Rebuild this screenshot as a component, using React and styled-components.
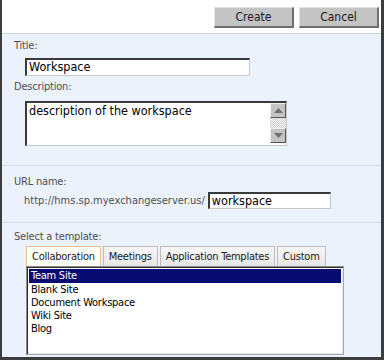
import React from 'react';
import styled, { createGlobalStyle } from 'styled-components';

const GlobalStyle = createGlobalStyle`
  body {
    margin: 0;
    font-family: "DejaVu Sans", sans-serif;
    font-stretch: condensed;
  }
`;

const templates = {
  Collaboration: ['Team Site', 'Blank Site', 'Document Workspace', 'Wiki Site', 'Blog'],
};

export default function App() {
  const tabs = ['Collaboration', 'Meetings', 'Application Templates', 'Custom'];
  const active = 'Collaboration';
  return (
    <Frame>
      <GlobalStyle />
      <Toolbar>
        <Button>Create</Button>
        <Button>Cancel</Button>
      </Toolbar>
      <Body>
        <Section $pt={5} $pb={19}>
          <Label>Title:</Label>
          <Input $width={225} $mt={5} $ml={11}>Workspace</Input>
          <Label $mt={4}>Description:</Label>
          <TextArea>
            <TextAreaText>description of the workspace</TextAreaText>
            <ScrollBar>
              <ScrollButton>
                <svg width="9" height="5" viewBox="0 0 9 5">
                  <path d="M0 5 L4.5 0 L9 5 Z" fill="#6f6f6f" />
                </svg>
              </ScrollButton>
              <ScrollTrack />
              <ScrollButton>
                <svg width="9" height="5" viewBox="0 0 9 5">
                  <path d="M0 0 L4.5 5 L9 0 Z" fill="#6f6f6f" />
                </svg>
              </ScrollButton>
            </ScrollBar>
          </TextArea>
        </Section>
        <Section $pt={9} $pb={13}>
          <Label>URL name:</Label>
          <UrlRow>
            <UrlPrefix>http://hms.sp.myexchangeserver.us/</UrlPrefix>
            <Input $width={123} $height={17}>workspace</Input>
          </UrlRow>
        </Section>
        <Section $pt={7} $last>
          <Label>Select a template:</Label>
          <Tabs>
            {tabs.map((t) => (
              <Tab key={t} $active={t === active}>
                {t}
              </Tab>
            ))}
          </Tabs>
          <ListBox>
            {templates[active].map((item, i) => (
              <ListItem key={item} $selected={i === 0}>
                {item}
              </ListItem>
            ))}
          </ListBox>
        </Section>
      </Body>
    </Frame>
  );
}

const Frame = styled.div`
  width: 384px;
  height: 360px;
  box-sizing: border-box;
  border-left: 2px solid #3d3d3d;
  border-right: 3px solid #3d3d3d;
  border-bottom: 3px solid #3d3d3d;
  display: flex;
  flex-direction: column;
  background: #ebf2fc;
  overflow: hidden;
`;

const Toolbar = styled.div`
  height: 34px;
  flex: none;
  box-sizing: border-box;
  background: #ffffff;
  border-bottom: 1px solid #cfd6df;
  display: flex;
  justify-content: flex-end;
  align-items: flex-start;
  gap: 5px;
  padding: 7px 2px 0 0;
`;

const Button = styled.div`
  width: 80px;
  height: 21px;
  box-sizing: border-box;
  background: #c4c4c4;
  border-top: 1px solid #e2e2e2;
  border-left: 1px solid #e2e2e2;
  border-right: 2px solid #6e6e6e;
  border-bottom: 2px solid #6e6e6e;
  display: flex;
  align-items: center;
  justify-content: center;
  font-size: 12px;
  color: #1a1a1a;
`;

const Body = styled.div`
  flex: 1;
  display: flex;
  flex-direction: column;
`;

const Section = styled.div`
  display: flex;
  flex-direction: column;
  align-items: flex-start;
  padding: ${(p) => p.$pt || 0}px 0 ${(p) => p.$pb || 0}px 12px;
  border-bottom: ${(p) => (p.$last ? 'none' : '1px solid #d3dce7')};
  flex: ${(p) => (p.$last ? 1 : 'none')};
`;

const Label = styled.div`
  font-size: 11px;
  line-height: 14px;
  letter-spacing: -0.2px;
  color: #4f4f4f;
  margin-top: ${(p) => p.$mt || 0}px;
`;

const Input = styled.div`
  width: ${(p) => p.$width}px;
  height: ${(p) => p.$height || 18}px;
  box-sizing: border-box;
  background: #ffffff;
  border-top: 2px solid #3a3a3a;
  border-left: 2px solid #3a3a3a;
  border-right: 1px solid #c8c8c8;
  border-bottom: 1px solid #c8c8c8;
  font-size: 12.5px;
  line-height: 14px;
  padding-left: 2px;
  color: #000;
  margin: ${(p) => p.$mt || 0}px 0 0 ${(p) => p.$ml || 0}px;
`;

const TextArea = styled.div`
  width: 262px;
  height: 45px;
  box-sizing: border-box;
  background: #ffffff;
  border-top: 2px solid #3a3a3a;
  border-left: 2px solid #3a3a3a;
  border-right: 1px solid #c8c8c8;
  border-bottom: 1px solid #c8c8c8;
  margin: 7px 0 0 11px;
  display: flex;
`;

const TextAreaText = styled.div`
  flex: 1;
  font-size: 12.5px;
  line-height: 15px;
  padding-left: 2px;
  color: #000;
`;

const ScrollBar = styled.div`
  width: 16px;
  display: flex;
  flex-direction: column;
  padding-bottom: 2px;
`;

const ScrollButton = styled.div`
  height: 15px;
  box-sizing: border-box;
  background: #c4c4c4;
  border-top: 1px solid #eeeeee;
  border-left: 1px solid #eeeeee;
  border-right: 1px solid #555555;
  border-bottom: 1px solid #555555;
  display: flex;
  align-items: center;
  justify-content: center;
`;

const ScrollTrack = styled.div`
  flex: 1;
  background: repeating-conic-gradient(#c8c8c8 0% 25%, #ffffff 0% 50%) 0 0 / 2px 2px;
`;

const UrlRow = styled.div`
  display: flex;
  align-items: center;
  gap: 3px;
  margin: 3px 0 0 10px;
`;

const UrlPrefix = styled.div`
  font-size: 11px;
  color: #4f4f4f;
`;

const Tabs = styled.div`
  display: flex;
  gap: 2px;
  margin: 2px 0 0 12px;
`;

const Tab = styled.div`
  height: 20px;
  box-sizing: border-box;
  padding: 0 5px;
  display: flex;
  align-items: center;
  font-size: 11px;
  letter-spacing: -0.25px;
  color: #222;
  background: ${(p) => (p.$active ? '#fffef9' : 'linear-gradient(#f7f7f7, #e6e6e6)')};
  border: 1px solid ${(p) => (p.$active ? '#e1c58c' : '#bdbdbd')};
  border-bottom: none;
`;

const ListBox = styled.div`
  width: 318px;
  height: 89px;
  box-sizing: border-box;
  margin-left: 12px;
  background: #ffffff;
  border-top: 1px solid #8a8a8a;
  border-left: 1px solid #8a8a8a;
  border-right: 1px solid #a9a9a9;
  border-bottom: 1px solid #a9a9a9;
  box-shadow: inset 1px 1px 0 #303030, inset -1px -1px 0 #e6e6e6;
  padding: 2px;
  display: flex;
  flex-direction: column;
`;

const ListItem = styled.div`
  height: 13px;
  line-height: 13px;
  font-size: 11px;
  letter-spacing: -0.25px;
  padding-left: 2px;
  color: ${(p) => (p.$selected ? '#ffffff' : '#000000')};
  background: ${(p) => (p.$selected ? '#0a0a73' : 'transparent')};
  &:first-child {
    height: 14px;
    line-height: 14px;
  }
`;
